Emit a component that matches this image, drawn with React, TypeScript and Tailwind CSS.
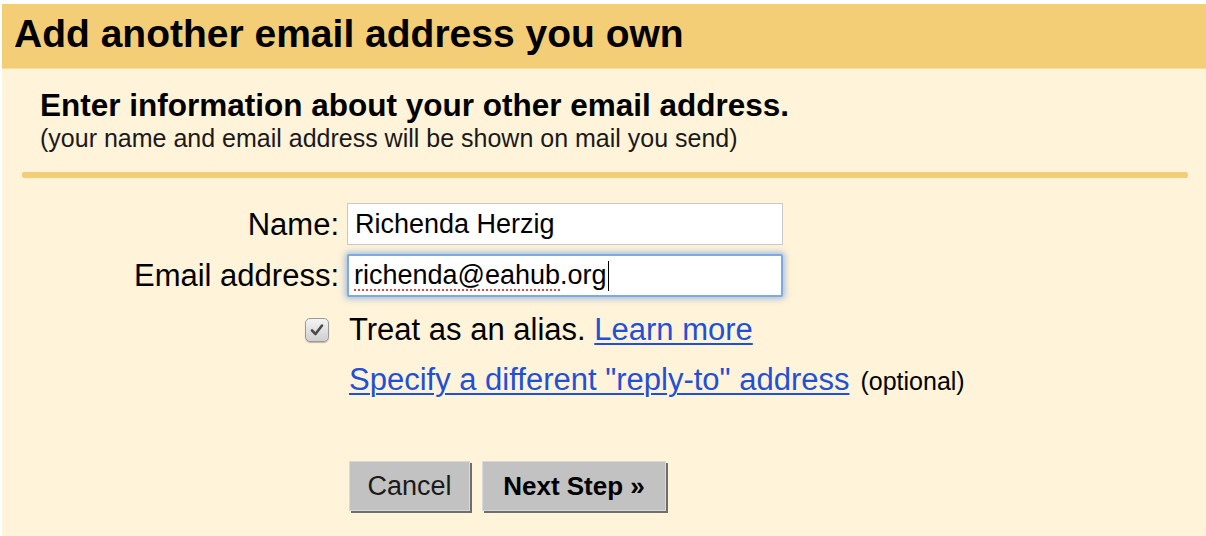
import React from 'react'

const font = { fontFamily: '"Liberation Sans", Arial, Helvetica, sans-serif' }

function Checkbox() {
  return (
    <div className="w-[24px] h-[24px] rounded-[5px] border border-[#9a9a9a] bg-gradient-to-b from-[#f4f4f4] to-[#cfcfcf] shadow-[0_1px_1px_rgba(0,0,0,0.25)] flex items-center justify-center">
      <svg width="16" height="16" viewBox="0 0 16 16">
        <path d="M3 8.5 L6.5 12 L13 3.5" fill="none" stroke="#4a4a4a" strokeWidth="2.6" strokeLinecap="round" strokeLinejoin="round" />
      </svg>
    </div>
  )
}

export default function App() {
  return (
    <div className="w-[1206px] h-[536px] bg-white pt-[4px] pl-[2px] flex flex-col overflow-hidden" style={font}>
      {/* Title bar */}
      <div className="h-[64px] bg-[#f4cd77] flex items-center pl-[12px] pb-[6px] shrink-0">
        <h1 className="text-[39px] font-bold text-black leading-none">Add another email address you own</h1>
      </div>

      {/* Body */}
      <div className="flex-1 bg-[#fff3d9] border-t border-[#f8dc9c]">
        <div className="pl-[38px] pt-[18px]">
          <h2 className="text-[31.5px] font-bold text-black leading-[36px]">Enter information about your other email address.</h2>
          <p className="text-[25px] text-[#1a1a1a] leading-[30px]">(your name and email address will be shown on mail you send)</p>
        </div>

        <div className="ml-[20px] w-[1166px] h-[6px] mt-[19px] rounded-[2px] bg-[#f4cd77]" />

        <div className="grid grid-cols-[345px_1fr] mt-[25px] items-center">
          <label className="text-right pr-[8px] text-[31px] text-black leading-none">Name:</label>
          <div className="w-[436px] h-[42px] bg-white border border-[#c8c8c8] flex items-center pl-[7px] text-[27px] text-black">
            Richenda Herzig
          </div>

          <label className="text-right pr-[8px] text-[31px] text-black leading-none mt-[9px]">Email address:</label>
          <div className="mt-[9px] w-[436px] h-[43px] bg-white border-2 border-[#7da9e4] rounded-[2px] shadow-[0_0_6px_2px_rgba(92,148,228,0.55)] flex items-center pl-[5px] text-[27px] text-black">
            <span className="underline decoration-dotted decoration-[#e0453a] decoration-[2px] underline-offset-[5px]">richenda@eahub</span>
            <span>.org</span>
            <span className="inline-block w-[1.5px] h-[30px] bg-black ml-[1px]" />
          </div>

          <div className="flex justify-end pr-[18px] mt-[16px]">
            <Checkbox />
          </div>
          <div className="mt-[16px] pl-[2px] text-[31px] leading-[34px] text-black">
            Treat as an alias.{' '}
            <a className="text-[#1f50d6] underline underline-offset-[3px] decoration-[1.5px]">Learn more</a>
          </div>

          <div />
          <div className="mt-[16px] pl-[2px] leading-[34px] flex items-baseline">
            <a className="text-[31px] text-[#1f50d6] underline underline-offset-[3px] decoration-[1.5px]">Specify a different &quot;reply-to&quot; address</a>
            <span className="ml-[11px] text-[25px] text-black">(optional)</span>
          </div>

          <div />
          <div className="mt-[63px] pl-[2px] flex gap-[12px]">
            <button className="w-[121px] h-[50px] bg-[#c2c2c2] border border-[#d8d8d8] shadow-[2px_2px_0_#6e6e6e] text-[27px] text-[#1a1a1a]">
              Cancel
            </button>
            <button className="w-[184px] h-[50px] bg-[#c2c2c2] border border-[#d8d8d8] shadow-[2px_2px_0_#6e6e6e] text-[26px] font-bold text-black">
              Next Step »
            </button>
          </div>
        </div>
      </div>
    </div>
  )
}
